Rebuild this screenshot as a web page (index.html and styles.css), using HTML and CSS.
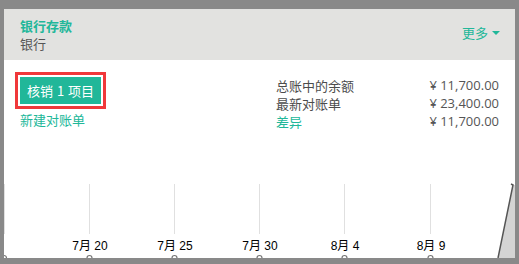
FILE: index.html
```html
<!DOCTYPE html>
<html>
<head>
    <meta charset="UTF-8">
    <meta name="viewport" content="width=device-width, initial-scale=1.0">
    <title>银行存款</title>
    <link rel="stylesheet" href="styles.css">
</head>
<body>
    <div class="card">
        <div class="card-header">
            <div class="titles">
                <div class="title">银行存款</div>
                <div class="subtitle">银行</div>
            </div>
            <div class="more">更多 <span class="caret"></span></div>
        </div>
        <div class="card-main">
            <div class="actions">
                <div class="highlight">
                    <button class="btn-primary">核销 1 项目</button>
                </div>
                <a class="link">新建对账单</a>
            </div>
            <div class="totals">
                <span class="label">总账中的余额</span><span class="value">¥ 11,700.00</span>
                <span class="label">最新对账单</span><span class="value">¥ 23,400.00</span>
                <span class="label diff">差异</span><span class="value">¥ 11,700.00</span>
            </div>
        </div>
        <div class="chart">
            <svg width="511" height="127" viewBox="0 0 511 127">
                <g class="grid">
                    <line x1="0.5" y1="53" x2="0.5" y2="103"></line>
                    <line x1="85.5" y1="53" x2="85.5" y2="103"></line>
                    <line x1="170.5" y1="53" x2="170.5" y2="103"></line>
                    <line x1="255.5" y1="53" x2="255.5" y2="103"></line>
                    <line x1="340.5" y1="53" x2="340.5" y2="103"></line>
                    <line x1="426.5" y1="53" x2="426.5" y2="103"></line>
                </g>
                <g class="ticks">
                    <text x="86" y="119">7月 20</text>
                    <text x="171" y="119">7月 25</text>
                    <text x="256" y="119">7月 30</text>
                    <text x="341" y="119">8月 4</text>
                    <text x="427" y="119">8月 9</text>
                </g>
                <g class="dots">
                    <circle cx="0" cy="127" r="2.5"></circle>
                    <circle cx="85.5" cy="127" r="2.5"></circle>
                    <circle cx="170.5" cy="127" r="2.5"></circle>
                    <circle cx="255.5" cy="127" r="2.5"></circle>
                    <circle cx="340.5" cy="127" r="2.5"></circle>
                    <circle cx="426.5" cy="127" r="2.5"></circle>
                </g>
                <polygon class="area" points="509,54 494,127 511,127 511,54"></polygon>
                <polyline class="edge" points="507,53 509,54 494,127"></polyline>
            </svg>
        </div>
    </div>
</body>
</html>
```

FILE: styles.css
```css
* {
    box-sizing: border-box;
}

body {
    margin: 0;
    height: 264px;
    overflow: hidden;
    background: #898989;
    font-family: "Noto Sans CJK SC", "Noto Sans", sans-serif;
    font-size: 13px;
    color: #4c4c4c;
}

.card {
    margin: 9px 0 0 4px;
    width: 511px;
    height: 249px;
    background: #fff;
    overflow: hidden;
}

.card-header {
    height: 51px;
    padding: 8px 15px 0 16px;
    background: #e2e2e0;
    display: flex;
    justify-content: space-between;
    align-items: flex-start;
}

.titles {
    line-height: 18px;
}

.title {
    color: #21b799;
    font-weight: bold;
}

.subtitle {
    color: #555;
}

.more {
    color: #21b799;
    margin-top: 7px;
    line-height: 18px;
    display: flex;
    align-items: center;
    gap: 1px;
}

.caret {
    width: 0;
    height: 0;
    border-left: 4px solid transparent;
    border-right: 4px solid transparent;
    border-top: 4px solid #21b799;
    margin-left: 3px;
}

.card-main {
    display: flex;
    justify-content: space-between;
    padding: 12px 16px 0 11px;
    height: 71px;
}

.actions {
    display: flex;
    flex-direction: column;
    align-items: flex-start;
}

.highlight {
    border: 3px solid #f0383a;
    padding: 2px;
}

.btn-primary {
    display: block;
    width: 81px;
    height: 27px;
    padding: 0;
    border: none;
    background: #21b799;
    color: #fff;
    font-family: "Noto Sans CJK SC", "Noto Sans", sans-serif;
    font-size: 13px;
    font-weight: 400;
    word-spacing: 1px;
}

.link {
    color: #21b799;
    margin: 2px 0 0 5px;
    line-height: 17px;
}

.totals {
    width: 223px;
    margin-top: 5px;
    display: grid;
    grid-template-columns: auto auto;
    justify-content: space-between;
    line-height: 17.5px;
}

.value {
    text-align: right;
    color: #555;
    font-family: "Open Sans", sans-serif;
}

.diff {
    color: #21b799;
}

.chart {
    height: 127px;
}

.chart svg {
    display: block;
}

.grid line {
    stroke: #e0e0e0;
    stroke-width: 1;
}

.ticks text {
    font-family: "Liberation Sans", "Noto Sans CJK SC", sans-serif;
    font-size: 12px;
    fill: #000;
    text-anchor: middle;
}

.dots circle {
    fill: #fff;
    stroke: #777;
    stroke-width: 1.2;
}

.area {
    fill: #d4d4d4;
}

.edge {
    fill: none;
    stroke: #555;
    stroke-width: 1.5;
}
```
